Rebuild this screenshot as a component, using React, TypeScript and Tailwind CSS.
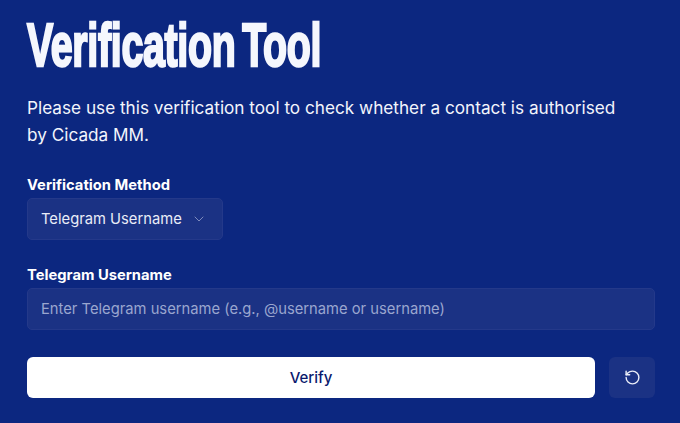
import { ChevronDown, RotateCcw } from "lucide-react";

export default function App() {
  return (
    <div className="h-[423px] w-[680px] overflow-hidden bg-[#0c2780] pl-[27px] pr-[25px] font-['Inter',sans-serif] text-white">
      <h1 className="mt-[11px] h-[67px] origin-left scale-x-[0.635] whitespace-nowrap font-['Liberation_Sans',sans-serif] text-[62px] font-bold leading-[67px] tracking-[-0.5px] [word-spacing:-6px] text-[#f5f7fd] [-webkit-text-stroke:2.5px_#f5f7fd]">
        Verification Tool
      </h1>
      <p className="mt-[16px] w-[600px] text-[17.2px] leading-[27px] text-[#f3f5fc]">
        Please use this verification tool to check whether a contact is authorised by Cicada MM.
      </p>

      <label className="mt-[27px] block text-[14.75px] font-bold leading-[20px]">Verification Method</label>
      <div className="mt-[3px] flex h-[42px] w-[196px] items-center justify-between rounded-[5px] border border-[#24398a] bg-[#1b3284] pl-[13px] pr-[15px] text-[14.75px] whitespace-nowrap text-[#e9ecf7]">
        <span>Telegram Username</span>
        <ChevronDown size={16} strokeWidth={1.5} className="text-[#7e8bbd]" />
      </div>

      <label className="mt-[25px] block text-[14.75px] font-bold leading-[20px]">Telegram Username</label>
      <div className="mt-[3px] flex h-[42px] w-[628px] items-center rounded-[5px] border border-[#24398a] bg-[#1b3284] px-[13px] text-[14.75px] text-[#9aa6cf]">
        Enter Telegram username (e.g., @username or username)
      </div>

      <div className="mt-[27px] flex gap-[14px]">
        <button className="h-[41px] w-[568px] rounded-[6px] bg-white pt-[1px] text-[15px] font-medium text-[#0a1a6e]">Verify</button>
        <button className="flex h-[41px] w-[46px] items-center justify-center rounded-[6px] bg-[#1b3284]">
          <RotateCcw size={17} strokeWidth={2} className="text-[#e9ecf7]" />
        </button>
      </div>
    </div>
  );
}
